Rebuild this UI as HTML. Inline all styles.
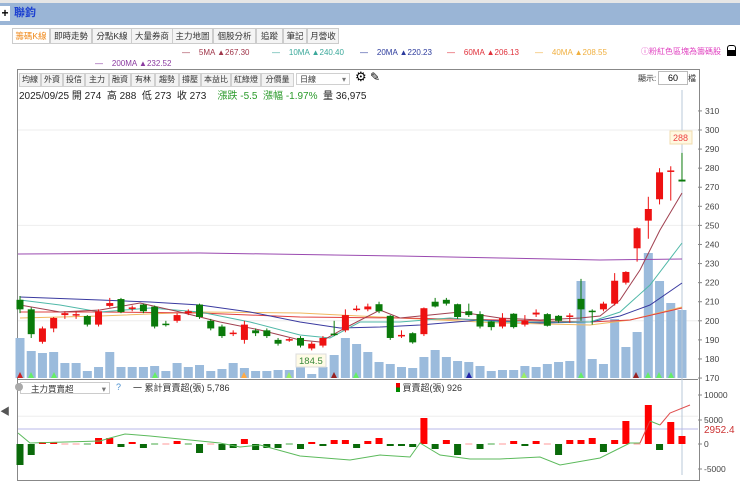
<!DOCTYPE html>
<html><head><meta charset="utf-8"><style>
body{margin:0;width:740px;height:475px;overflow:hidden;background:#fff;font-family:"Liberation Sans","Noto Sans CJK TC",sans-serif;position:relative}
.a{position:absolute;white-space:nowrap}
.tab{position:absolute;top:28px;height:14px;border:1px solid #ccc;background:#f4f4f4;font-size:8.5px;line-height:14px;color:#333;text-align:center;white-space:nowrap;overflow:hidden}
.tb{position:absolute;top:73px;height:12px;border:1px solid #d0d0d0;background:#f2f2f2;font-size:8px;line-height:12px;color:#333;text-align:center;white-space:nowrap;overflow:hidden}
</style></head><body>
<div class="a" style="left:0;top:0;width:740px;height:3px;background:#e6e6e6"></div>
<div class="a" style="left:0;top:3px;width:740px;height:22px;background:#9ab5d6"></div>
<div class="a" style="left:0;top:6px;width:10px;height:15px;background:#fff;font-size:12px;font-weight:bold;line-height:15px;text-align:center">+</div>
<div class="a" style="left:14px;top:6px;font-size:11px;font-weight:bold;color:#1b3fd0;line-height:15px">聯鈞</div>
<div class="tab" style="left:12px;width:36px;color:#f08a1c;background:#fff">籌碼K線</div>
<div class="tab" style="left:50px;width:40px">即時走勢</div>
<div class="tab" style="left:92px;width:38px">分點K線</div>
<div class="tab" style="left:131px;width:40px">大量券商</div>
<div class="tab" style="left:172px;width:39px">主力地圖</div>
<div class="tab" style="left:213px;width:41px">個股分析</div>
<div class="tab" style="left:256px;width:25px">追蹤</div>
<div class="tab" style="left:283px;width:22px">筆記</div>
<div class="tab" style="left:307px;width:30px">月營收</div>
<div class="a" style="top:48px;left:182px;font-size:8px;color:#a0364a">—&nbsp;&nbsp;&nbsp; 5MA ▲267.30</div>
<div class="a" style="top:48px;left:272px;font-size:8px;color:#3aa89a">—&nbsp;&nbsp;&nbsp; 10MA ▲240.40</div>
<div class="a" style="top:48px;left:360px;font-size:8px;color:#2b3a9c">—&nbsp;&nbsp;&nbsp; 20MA ▲220.23</div>
<div class="a" style="top:48px;left:447px;font-size:8px;color:#e0303a">—&nbsp;&nbsp;&nbsp; 60MA ▲206.13</div>
<div class="a" style="top:48px;left:535px;font-size:8px;color:#f0b040">—&nbsp;&nbsp;&nbsp; 40MA ▲208.55</div>
<div class="a" style="top:46px;left:641px;font-size:8px;color:#e040c0">ⓘ粉紅色區塊為籌碼股</div>
<div class="a" style="top:45px;left:727px;width:7px;height:5px;border:1.5px solid #000;border-bottom:none;border-radius:3px 3px 0 0"></div>
<div class="a" style="top:50px;left:727px;width:9px;height:6px;background:#000"></div>
<div class="a" style="top:59px;left:95px;font-size:8px;color:#8a3aa0">—&nbsp;&nbsp;&nbsp; 200MA ▲232.52</div>
<div class="a" style="left:17px;top:69px;width:681px;height:410px;border:1px solid #888"></div>
<div class="tb" style="left:19px;width:20px">均線</div>
<div class="tb" style="left:41px;width:20px">外資</div>
<div class="tb" style="left:63px;width:20px">投信</div>
<div class="tb" style="left:85px;width:22px">主力</div>
<div class="tb" style="left:109px;width:20px">融資</div>
<div class="tb" style="left:131px;width:22px">有林</div>
<div class="tb" style="left:155px;width:22px">趨勢</div>
<div class="tb" style="left:179px;width:20px">撐壓</div>
<div class="tb" style="left:201px;width:28px">本益比</div>
<div class="tb" style="left:231px;width:28px">紅綠燈</div>
<div class="tb" style="left:261px;width:31px">分價量</div>
<div class="tb" style="left:296px;width:54px;background:#fff;text-align:left;padding-left:3px;box-sizing:border-box">日線<span style="float:right;padding-right:3px;color:#777">▾</span></div>
<div class="a" style="left:355px;top:69px;font-size:13px">⚙</div>
<div class="a" style="left:370px;top:70px;font-size:12px">✎</div>
<div class="a" style="left:19px;top:87px;font-size:10px;color:#222">2025/09/25 開 274&nbsp; 高 288&nbsp; 低 273&nbsp; 收 273&nbsp;&nbsp;&nbsp; <span style="color:#2a9a2a">漲跌 -5.5&nbsp; 漲幅 -1.97%</span>&nbsp; 量 36,975</div>
<div class="a" style="left:638px;top:73px;font-size:8px;color:#333">顯示:</div>
<div class="a" style="left:658px;top:71px;width:28px;height:12px;border:1px solid #bbb;font-size:9px;line-height:12px;text-align:center">60</div>
<div class="a" style="left:688px;top:73px;font-size:8px;color:#333">檔</div>
<div class="a" style="left:0;top:403px;font-size:10px;color:#555">◀</div>
<div class="a" style="left:20px;top:382px;width:90px;height:12px;border:1px solid #ccc;font-size:8.5px;line-height:12px;padding-left:10px;box-sizing:border-box;color:#333">主力買賣超<span style="float:right;padding-right:3px;color:#777">▾</span></div>
<div class="a" style="left:15px;top:383px;width:8px;height:8px;border-radius:50%;background:#aaa"></div>
<div class="a" style="left:116px;top:382px;font-size:9px;color:#4a90d0">?</div>
<div class="a" style="left:133px;top:381px;font-size:9px;color:#333">一 累計買賣超(張) 5,786</div>
<div class="a" style="left:396px;top:381px;font-size:9px;color:#333"><span style="display:inline-block;width:4px;height:9px;background:linear-gradient(#e00 50%,#080 50%);vertical-align:-1px"></span> 買賣超(張) 926</div>
<svg class="a" style="left:0;top:0" width="740" height="475" id="s" font-family="Liberation Sans" font-size="8.5"></svg>
<script>
var s=document.getElementById('s'),h='';
function Y(p){return 130+(300-p)*1.908}
[150,200,250,300].forEach(function(p){h+='<line x1="18" x2="698" y1="'+Y(p)+'" y2="'+Y(p)+'" stroke="#eee"/>'});
for(var p=170;p<=310;p+=10){var y=Y(p);h+='<line x1="698" x2="702" y1="'+y+'" y2="'+y+'" stroke="#888"/><text x="705" y="'+(y+3)+'" fill="#444">'+p+'</text>'}
h+='<line x1="18" x2="698" y1="379.5" y2="379.5" stroke="#888"/>';
var v=[40,27,25,26,15,15,7,11,26,11,11,11,12,7,15,11,13,7,9,15,10,7,7,8,8,11,4,11,23,40,34,26,16,14,11,10,21,28,21,17,16,12,7,8,8,12,11,14,16,17,97,19,14,59,31,46,125,97,75,68];
var xs=[];for(var i=0;i<60;i++)xs.push(20+i*11.22);
v.forEach(function(hh,i){h+='<rect x="'+(xs[i]-4.5)+'" y="'+(378-hh)+'" width="9" height="'+hh+'" fill="#9bbbdc"/>'});
h+='<line x1="682" x2="682" y1="90" y2="475" stroke="#b8c8d8"/>';
function pl(pts,c){h+='<polyline fill="none" stroke="'+c+'" stroke-width="1" points="'+pts+'"/>'}
pl('18,254 200,253 400,256 500,258 600,260 682,259','#9a4ab0');
pl('20,318 100,316 200,312 300,313 400,318 500,323 590,325 630,320 682,307','#f0b860');
pl('20,312 100,312 200,313 300,317 400,318 500,320 590,322 630,320 682,308','#e04040');
pl('20,297 100,300 150,302 200,305 250,312 300,322 340,328 380,327 420,325 480,320 540,323 590,322 620,316 650,305 682,283','#3a3aa0');
pl('20,300 60,305 100,312 150,308 200,312 250,322 300,335 330,338 360,322 400,322 450,318 500,322 550,322 590,322 620,312 650,285 682,243','#50b8a8');
pl('20,305 60,312 100,310 140,303 180,312 220,322 260,330 300,340 320,342 345,328 380,310 400,318 430,315 460,312 500,318 540,320 580,318 600,316 620,300 640,270 660,230 682,193','#a04050');
var c=[[211,206,213,204],[206,193,207,191],[189,196,197,188],[196,201.5,202,194],[203,204,205,201],[203,203.5,205,201],[202.5,198,203,197],[198,205,206,197],[207.8,209.3,212,207],[211.4,204.6,212,204],[206.3,207,208,205],[208.5,205,209,204],[207.4,197,208,196],[198.5,198,200,197],[200,203,204,199],[204,205,206,203],[208.5,202,209,201],[200,196,201,195],[197,192,198,191],[193.2,193.8,195,192],[190,198,200,188],[195,193.5,196,192],[195,192,196,191],[190,188,191,187],[190,190.4,191,189],[191,187,192,186],[185.5,188,189,184.5],[187,191,192,186],[193.3,192.8,200,192],[195,203,206,194],[206,206.4,208,205],[206,207.5,209,205],[208.7,205,210,204],[202.6,191,203,190],[192.3,192.6,195,191],[193.5,188.7,194,188],[193,206.6,207,192],[210,207.5,212,207],[211,209,212,208],[208.7,202,209,201],[205,203,209,202],[203.5,197,205,196],[199.6,196.7,200,195],[197,201.4,204,196],[203.7,196.7,204,196],[198,200,203,197],[203.3,204.3,206,202],[203.5,197.4,204,197],[202.6,200,203,199],[202.4,202.8,204,199],[211.5,206,222,200],[205.3,205,206,198],[206,209,210,205],[209,221,225,208],[220,225.6,226,219],[238,248.5,249,231],[252.5,258.6,265,243],[263.7,277.8,280,261],[278.3,278.8,281,263],[274,273,288,273]];
c.forEach(function(k,i){var x=xs[i],up=k[1]>=k[0],col=up?'#ee1111':'#0a7a0a';var t=Y(Math.max(k[0],k[1])),b=Y(Math.min(k[0],k[1]));if(b-t<1.5)b=t+1.5;
h+='<line x1="'+x+'" x2="'+x+'" y1="'+Y(k[2])+'" y2="'+Y(k[3])+'" stroke="'+col+'"/><rect x="'+(x-3.5)+'" y="'+t+'" width="7" height="'+(b-t)+'" fill="'+col+'"/>'});
h+='<rect x="296" y="354" width="30" height="13" fill="#fffbe6" stroke="#ddd"/><text x="299" y="364" fill="#3a8a3a" font-size="9.5">184.5</text>';
h+='<rect x="670" y="131" width="22" height="13" fill="#fff8e0" stroke="#f0dcb0"/><text x="673" y="141" fill="#e44" font-size="9">288</text>';
[[20,'#c22'],[31,'#6e6'],[54,'#6e6'],[155,'#6e6'],[244,'#fa4'],[289,'#9e6'],[334,'#922'],[356,'#6e6'],[469,'#22a'],[524,'#9e6'],[581,'#6e6'],[636,'#922'],[648,'#6e6'],[659,'#6e6'],[671,'#6e6']].forEach(function(m){h+='<polygon points="'+(m[0]-3)+',378 '+(m[0]+3)+',378 '+m[0]+',372" fill="'+m[1]+'"/>'});
[[10000,395],[5000,420],[0,444],[-5000,469]].forEach(function(a){h+='<line x1="698" x2="702" y1="'+a[1]+'" y2="'+a[1]+'" stroke="#888"/><text x="704" y="'+(a[1]+3)+'" fill="#444">'+a[0]+'</text>'});
h+='<line x1="18" x2="698" y1="429" y2="429" stroke="#b8b8e8"/><text x="704" y="433" fill="#c33" font-size="10">2952.4</text>';
var bb=[-21,-11,2,2,0,0,0,6,6,-3,2,-4,0,0,3,0,-9,0,-6,-4,5,-6,-4,-4,0,-5,2,-2,4,4,-4,3,6,-2,-2,-3,26,-5,4,-11,0,-5,0,0,3,-2,3,0,-11,4,4,6,-8,4,23,0,39,-6,22,8];
bb.forEach(function(b,i){var x=xs[i];if(b==0){h+='<line x1="'+(x-3.5)+'" x2="'+(x+3.5)+'" y1="444" y2="444" stroke="'+(i%3?'#f99':'#4a4')+'"/>';return}
h+='<rect x="'+(x-3.5)+'" y="'+(b>0?444-b:444)+'" width="7" height="'+Math.abs(b)+'" fill="'+(b>0?'#f00':'#0a6a0a')+'"/>'});
pl('18,433 30,443 100,441 110,438 125,434 150,436 190,440 220,443 240,447 260,445 300,456 350,460 380,455 410,457 420,443 440,455 470,459 500,459 540,457 560,465 600,458 630,443 640,443','#5cba5c');
pl('650,421 660,425','#5cba5c');
pl('640,443 650,421','#e04040');pl('660,425 670,413 690,405','#e05050');
s.innerHTML=h;
</script>
</body></html>
